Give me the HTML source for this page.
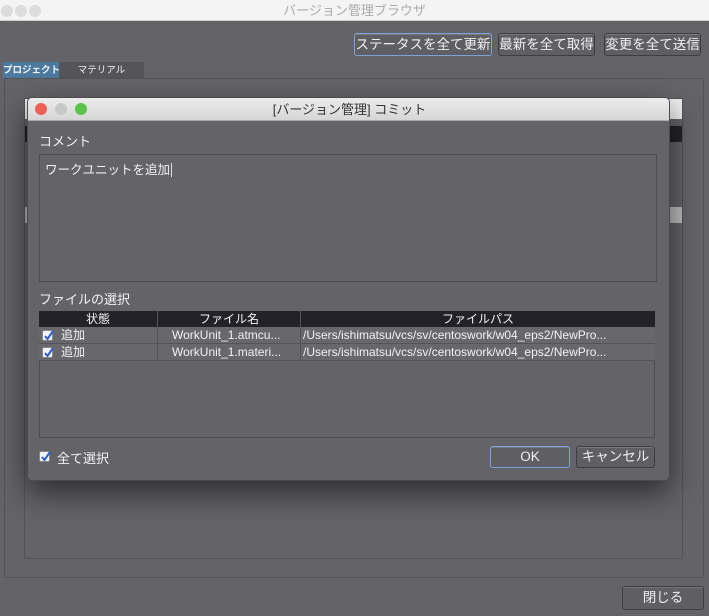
<!DOCTYPE html>
<html><head><meta charset="utf-8"><style>
*{box-sizing:border-box;margin:0;padding:0}
body{width:709px;height:616px;background:#646368;font-family:"Liberation Sans","Noto Sans CJK JP",sans-serif;position:relative;overflow:hidden;color:#f2f2f2;font-size:13px}
.abs{position:absolute}
.tb{left:0;top:0;width:709px;height:21px;background:#f4f4f4;border-bottom:1px solid #d0d0d0;text-align:center;color:#aaa;font-size:13px;line-height:21px}
.dot{width:12px;height:12px;border-radius:50%;top:5px}
.btn{background:#5f5e63;border:1px solid #3e3d42;border-radius:3px;text-align:center;color:#f0f0f0;font-size:13.5px;box-shadow:inset 0 1px 0 #78777c;white-space:nowrap}
.tab{top:62px;height:17px;font-size:9.5px;font-weight:bold;text-align:center;line-height:17px;white-space:nowrap}
.cb{position:absolute;width:11px;height:11px;background:#f4f4f4;border:1px solid #888;border-radius:2px}
.cb svg{position:absolute;left:0;top:-1px}
.row{left:39px;width:616px;height:17px;background:#68676c;border-bottom:1px solid #55545a;font-size:12px;line-height:16px;white-space:nowrap}
.row .c{position:absolute;top:0;height:16px}
</style></head><body>
<div class="abs tb">バージョン管理ブラウザ</div>
<div class="abs dot" style="left:1px;background:#dcdcdc"></div>
<div class="abs dot" style="left:15px;background:#dcdcdc"></div>
<div class="abs dot" style="left:29px;background:#dcdcdc"></div>
<div class="abs btn" style="left:354px;top:33px;width:138px;height:23px;line-height:21px;border-color:#7aa4d8">ステータスを全て更新</div>
<div class="abs btn" style="left:498px;top:33px;width:97px;height:23px;line-height:21px">最新を全て取得</div>
<div class="abs btn" style="left:604px;top:33px;width:97px;height:23px;line-height:21px">変更を全て送信</div>
<div class="abs tab" style="left:3px;width:56px;background:#4c7a9f">プロジェクト</div>
<div class="abs tab" style="left:59px;width:85px;background:#555459;font-weight:normal">マテリアル</div>
<div class="abs" style="left:4px;top:78px;width:700px;height:500px;border:1px solid #545358"></div>
<div class="abs" style="left:24px;top:98px;width:659px;height:461px;border:1px solid #545358;background:#646368"></div>
<div class="abs" style="left:25px;top:99px;width:657px;height:20px;background:#eee"></div>
<div class="abs" style="left:25px;top:126px;width:657px;height:16px;background:#222228"></div>
<div class="abs" style="left:25px;top:207px;width:657px;height:16px;background:#bbb"></div>
<div class="abs" style="left:27px;top:97px;width:643px;height:384px;background:#646368;border-radius:5px;box-shadow:0 12px 30px rgba(0,0,0,.55);overflow:hidden;border:1px solid #4a494e">
 <div class="abs" style="left:0;top:0;width:643px;height:23px;background:linear-gradient(#ececec,#d6d6d6);border-bottom:1px solid #aaa;color:#333;text-align:center;line-height:23px;font-size:13px">[バージョン管理] コミット</div>
 <div class="abs dot" style="left:7px;top:5px;background:#ee5f57"></div>
 <div class="abs dot" style="left:27px;top:5px;background:#c8c8c8"></div>
 <div class="abs dot" style="left:47px;top:5px;background:#5ac44a"></div>
 <div class="abs" style="left:11px;top:33px">コメント</div>
 <div class="abs" style="left:11px;top:56px;width:618px;height:128px;border:1px solid #4e4d52;background:#646368;padding:4px 5px;font-size:12.5px">ワークユニットを追加<span style="border-left:1px solid #ddd;margin-left:1px"></span></div>
 <div class="abs" style="left:11px;top:191px">ファイルの選択</div>
</div>
<div class="abs" style="left:39px;top:311px;width:616px;height:127px;border:1px solid #4e4d52;background:#646368"></div>
<div class="abs" style="left:39px;top:311px;width:616px;height:16px;background:#222228;font-size:12px;line-height:16px">
 <div class="abs" style="left:0;width:118px;text-align:center">状態</div>
 <div class="abs" style="left:118px;width:143px;text-align:center;border-left:1px solid #555">ファイル名</div>
 <div class="abs" style="left:261px;width:355px;text-align:center;border-left:1px solid #555">ファイルパス</div>
</div>
<div class="abs row" style="top:327px">
 <div class="cb" style="left:3px;top:3px"><svg width="11" height="11"><path d="M2 6 L4.5 9 L10 1" stroke="#2a5fd0" stroke-width="2" fill="none"/></svg></div><div class="c" style="left:22px">追加</div>
 <div class="c" style="left:118px;width:143px;padding-left:14px;border-left:1px solid #55545a">WorkUnit_1.atmcu...</div>
 <div class="c" style="left:261px;width:355px;padding-left:2px;border-left:1px solid #55545a">/Users/ishimatsu/vcs/sv/centoswork/w04_eps2/NewPro...</div>
</div>
<div class="abs row" style="top:344px">
 <div class="cb" style="left:3px;top:3px"><svg width="11" height="11"><path d="M2 6 L4.5 9 L10 1" stroke="#2a5fd0" stroke-width="2" fill="none"/></svg></div><div class="c" style="left:22px">追加</div>
 <div class="c" style="left:118px;width:143px;padding-left:14px;border-left:1px solid #55545a">WorkUnit_1.materi...</div>
 <div class="c" style="left:261px;width:355px;padding-left:2px;border-left:1px solid #55545a">/Users/ishimatsu/vcs/sv/centoswork/w04_eps2/NewPro...</div>
</div>
<div class="cb" style="left:39px;top:451px"><svg width="11" height="11"><path d="M2 6 L4.5 9 L10 1" stroke="#2a5fd0" stroke-width="2" fill="none"/></svg></div>
<div class="abs" style="left:57px;top:448px">全て選択</div>
<div class="abs btn" style="left:490px;top:446px;width:80px;height:22px;line-height:20px;border-color:#7aa4d8">OK</div>
<div class="abs btn" style="left:576px;top:446px;width:79px;height:22px;line-height:20px">キャンセル</div>
<div class="abs btn" style="left:622px;top:586px;width:82px;height:24px;line-height:22px">閉じる</div>
</body></html>
